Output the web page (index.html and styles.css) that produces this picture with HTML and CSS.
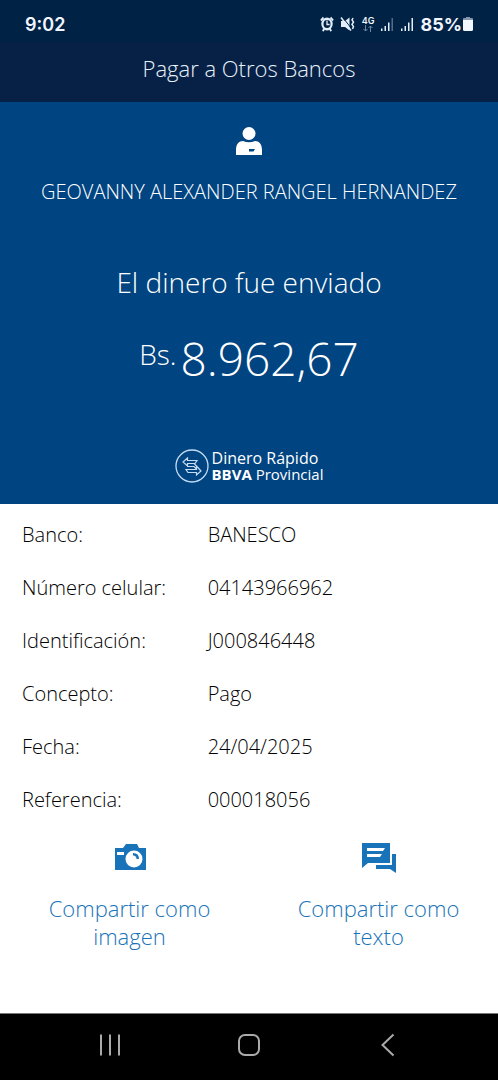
FILE: index.html
```html
<!DOCTYPE html>
<html lang="es">
<head>
<meta charset="utf-8">
<meta name="viewport" content="width=device-width, initial-scale=1">
<title>Pagar a Otros Bancos</title>
<link rel="stylesheet" href="styles.css">
</head>
<body>
<div class="screen">
  <div class="status">
    <span class="clock">9:02</span>
    <div class="indicators">
      <svg width="14" height="16" viewBox="0 0 16 16" preserveAspectRatio="none" aria-hidden="true">
        <circle cx="8" cy="8" r="6.500" fill="#e4eefa"/>
        <path d="M1 4.500 4 1.500M15 4.500 12 1.500M3 15l2-2M13 15l-2-2" stroke="#e4eefa" stroke-width="2" fill="none"/>
        <circle cx="8" cy="8" r="4" fill="#002244"/>
        <path d="M8 4.500v4h3" stroke="#e4eefa" stroke-width="1.500" fill="none"/>
      </svg>
      <svg width="16" height="16" viewBox="0 0 16 16" aria-hidden="true">
        <path d="M1 5h4L9.500 1.500v13L5 11H1z" fill="#e4eefa"/>
        <path d="M2.500 1 11 12" stroke="#002244"/>
        <path d="M1 1.500 11 14.500" stroke="#e4eefa" stroke-width="1.500"/>
        <path d="M13 2l-1 2 1.500 2-1.500 2.500 1.500 2-1 2.500" stroke="#e4eefa" stroke-width="1.500" fill="none"/>
      </svg>
      <span class="network">
        <span>4G</span>
        <svg width="12" height="7" viewBox="0 0 12 7" fill="none" stroke="#6f88a4" aria-hidden="true"><path d="M3.500 0v6M1.500 4l2 2 2-2M8.500 7V1M6.500 3l2-2 2 2"/></svg>
      </span>
      <svg width="14" height="14" viewBox="0 0 14 14" fill="#e4eefa" aria-hidden="true"><path d="M1 11.500h1.500V14H1zM4.500 9H6v5H4.500zM8 5.500h1.500V14H8z"/><path d="M11.500 1H13v13h-1.500z" fill="#526d8c"/></svg>
      <svg width="14" height="14" viewBox="0 0 14 14" fill="#e4eefa" aria-hidden="true"><path d="M1 11.500h1.500V14H1zM4.500 9H6v5H4.500zM8 5.500h1.500V14H8zM11.500 1H13v13h-1.500z"/></svg>
      <span class="battery">85%<svg width="10" height="14" viewBox="0 0 10 14" aria-hidden="true"><path d="M3 0h4v1h2q1 0 1 1v2H0V2q0-1 1-1h2z" fill="#8496ac"/><path d="M0 3h10v9.500Q10 14 8.500 14h-7Q0 14 0 12.500z" fill="#f1f6ff"/></svg></span>
    </div>
  </div>
  <header class="appbar"><h1>Pagar a Otros Bancos</h1></header>
  <main>
    <section class="summary">
      <svg class="person" width="26" height="29" viewBox="0 0 26 29" aria-hidden="true">
        <circle cx="13" cy="6.500" r="6.500" fill="#fff"/>
        <path d="M0 28V23C0 17 3 14 7 14q6 2.500 12 0c4 0 7 3 7 9v5z" fill="#fff"/>
        <path d="M13 22h6l-1.500 2.500H13z" fill="#004481"/>
      </svg>
      <p class="recipient">GEOVANNY ALEXANDER RANGEL HERNANDEZ</p>
      <h2>El dinero fue enviado</h2>
      <p class="amount"><span class="currency">Bs.</span><span>8.962,67</span></p>
      <div class="brand">
        <svg width="34" height="34" viewBox="0 0 34 34" fill="none" stroke="#c5dcf2" aria-hidden="true">
          <circle cx="17" cy="17" r="16" stroke-width="1.300"/>
          <path d="M12.500 9 8 13l4.500 4v-2.500H20l2-3h-9.500zM21.500 17l4.500 5-4.500 4v-2.500H13l-2-3h10.500zM14 14.500h5l3 3M12 17.500h7l3 3" stroke-width="1.200"/>
        </svg>
        <p><span class="product">Dinero Rápido</span><span><b>BBVA</b> Provincial</span></p>
      </div>
    </section>
    <dl class="details">
      <dt>Banco:</dt><dd>BANESCO</dd>
      <dt>Número celular:</dt><dd>04143966962</dd>
      <dt>Identificación:</dt><dd>J000846448</dd>
      <dt>Concepto:</dt><dd>Pago</dd>
      <dt>Fecha:</dt><dd>24/04/2025</dd>
      <dt>Referencia:</dt><dd>000018056</dd>
    </dl>
    <div class="share">
      <button type="button">
        <svg width="32" height="32" viewBox="0 0 32 32" aria-hidden="true">
          <path d="M1 7h8l3-4h11l2 4h7v22H1z" fill="#1973b8"/>
          <path d="M3 11h7v3H3z" fill="#fff"/>
          <circle cx="20" cy="18" r="8.500" fill="#fff"/>
          <path d="M19 12q6 0 6 6h-2.500q0-3.500-3.500-3.500z" fill="#1973b8"/>
        </svg>
        <span>Compartir como imagen</span>
      </button>
      <button type="button">
        <svg width="34" height="32" viewBox="0 0 34 32" aria-hidden="true">
          <path d="M0 2h28v20H6l-6 5z" fill="#1973b8"/>
          <path d="M5 7h18l-2 3H5zM5 13h15l-2 3H5z" fill="#fff"/>
          <path d="M30 13h4v19l-6-4H14v-4h16z" fill="#1973b8"/>
        </svg>
        <span>Compartir como texto</span>
      </button>
    </div>
  </main>
  <nav class="navbar" aria-label="Sistema">
    <button type="button" aria-label="Recientes"><svg width="24" height="24" viewBox="0 0 24 24"><path d="M3 1.500v21M12 1.500v21M21 1.500v21"/></svg></button>
    <button type="button" aria-label="Inicio"><svg width="24" height="24" viewBox="0 0 24 24"><rect x="2" y="2" width="20" height="20" rx="6"/></svg></button>
    <button type="button" aria-label="Atrás"><svg width="24" height="24" viewBox="0 0 24 24"><path d="M17.500 1.500 6.500 12l11 10.500"/></svg></button>
  </nav>
</div>
</body>
</html>
```
FILE: styles.css
```css
* { box-sizing: border-box; }

body {
  margin: 0;
  background: #fff;
  color: #000;
  font-family: "Open Sans", "Noto Sans", sans-serif;
  font-weight: 300;
}

h1, h2, p, dl, dd { margin: 0; font-weight: 300; }
svg { display: block; flex: none; }
button { border: 0; padding: 0; background: none; font: inherit; color: inherit; }

.screen { display: flex; flex-direction: column; min-height: 100vh; }

.status {
  display: flex;
  justify-content: space-between;
  align-items: center;
  height: 42px;
  padding: 6px 25px 0;
  background: #002244;
  color: #f1f6ff;
  font-family: Inter, "Liberation Sans", sans-serif;
  font-size: 18px;
  font-weight: 600;
}
.indicators { display: flex; align-items: center; gap: 6px; }
.network { display: flex; flex-direction: column; align-items: center; font-size: 9px; line-height: 8px; }
.battery { display: flex; align-items: center; gap: 1px; font-weight: 700; }

.appbar {
  height: 60px;
  background: #072146;
  color: #e8f2fc;
  text-align: center;
}
.appbar h1 { font-size: 22px; line-height: 52px; }

main { flex: 1; }

.summary {
  display: flex;
  flex-direction: column;
  align-items: center;
  padding: 25px 20px 21px;
  background: #004481;
  color: #fff;
  text-align: center;
}
.recipient { margin-top: 22px; font-size: 20px; line-height: 28px; }
.summary h2 { margin-top: 58px; font-size: 28px; line-height: 36px; }
.amount { display: flex; margin-top: 28px; font-size: 46px; line-height: 60px; }
.currency { margin-right: 4px; font-size: 28px; line-height: 52px; }
.brand { display: flex; align-items: center; gap: 3px; margin-top: 61px; text-align: left; }
.brand p { font-size: 15px; line-height: 16px; }
.brand span { display: block; font-weight: 400; }
.brand .product { font-size: 16px; font-weight: 500; }
.brand b { font-weight: 700; }

.details {
  display: grid;
  grid-template-columns: 39% 1fr;
  padding: 4px 0 0 22px;
  font-size: 20px;
  line-height: 53px;
}

.share { display: grid; grid-template-columns: 1fr 1fr; color: #1973b8; }
.share button {
  display: flex;
  flex-direction: column;
  align-items: center;
  gap: 21px;
  padding: 15px 22px 0 32px;
  font-size: 22px;
  line-height: 28px;
  cursor: pointer;
}

.navbar {
  display: grid;
  grid-template-columns: repeat(3, 28%);
  justify-content: center;
  height: 67px;
  padding-bottom: 4px;
  background: #000;
  border-top: 1px solid #777;
}
.navbar button { display: flex; align-items: center; justify-content: center; }
.navbar svg { fill: none; stroke: #aaa; stroke-width: 2; }
```
